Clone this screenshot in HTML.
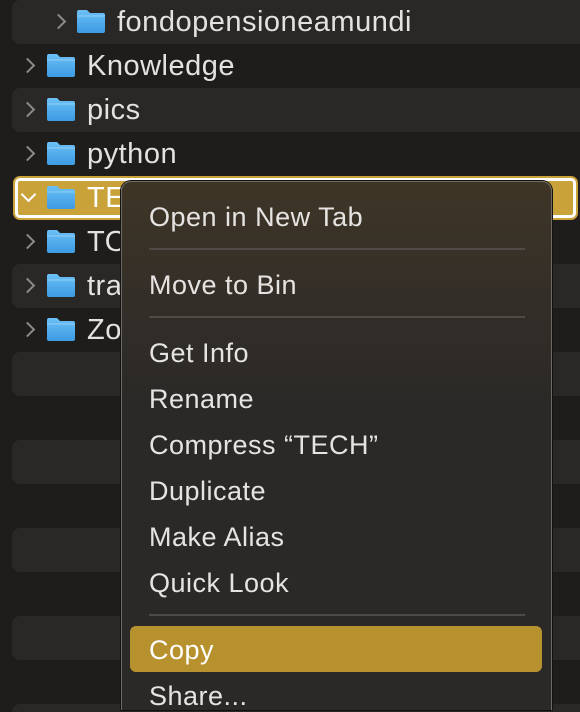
<!DOCTYPE html>
<html style="overflow:hidden;height:712px"><head><style>
body{margin:0;width:580px;height:712px;overflow:hidden;background:#1f1d1c;font-family:"Liberation Sans",sans-serif;position:relative}
.row{position:absolute;left:12px;right:0;height:44px;border-radius:8px 0 0 8px}
.s{background:#2a2827}
.t{position:absolute;color:#e4e2e0;font-size:29px;letter-spacing:0.5px;line-height:44px;white-space:nowrap}
.ch{position:absolute;width:9px;height:9px;border-right:2.5px solid #8d8a87;border-top:2.5px solid #8d8a87;transform:rotate(45deg)}
.f{position:absolute;width:30px;height:25px}
.menu{position:absolute;left:121px;top:181px;width:429px;height:528px;border:1.5px solid #6e6a64;border-bottom:none;border-radius:10px 10px 0 0;background:linear-gradient(#3e3526 0px,#332e28 120px,#2b2927 220px,#2b2927);box-shadow:0 0 0 1px #111}
.mi{position:absolute;left:27px;color:#e6e4e2;font-size:27px;letter-spacing:0.5px;line-height:44px;white-space:nowrap}
.sep{position:absolute;left:27px;width:376px;height:2px;background:#4e4b47}
</style></head><body>
<div class="row s" style="top:0"></div>
<div class="row s" style="top:88px"></div>
<div class="row s" style="top:264px"></div>
<div class="row s" style="top:352px"></div>
<div class="row s" style="top:440px"></div>
<div class="row s" style="top:528px"></div>
<div class="row s" style="top:616px"></div>
<div class="row s" style="top:704px;height:8px;border-radius:8px 0 0 0"></div>
<div style="position:absolute;left:13px;top:176px;width:565px;height:44px;border-radius:7px;background:#c9a23a;box-sizing:border-box;border:2px solid #c9a23a"><div style="position:absolute;inset:0;border:3px solid #fff;border-radius:5px"></div></div>

<svg width="0" height="0" style="position:absolute"><defs><linearGradient id="g" x1="0" y1="0" x2="0" y2="1"><stop offset="0" stop-color="#6cc0f5"/><stop offset="1" stop-color="#3d9be3"/></linearGradient></defs></svg>
<div class="ch" style="left:53px;top:16px"></div>
<svg class="f" style="left:76px;top:9px" viewBox="0 0 30 25"><path d="M1 3q0-2 2-2h8l3 3h13q2 0 2 2v16q0 2-2 2H3q-2 0-2-2z" fill="url(#g)"/><path d="M1 7h28" stroke="#8fd0fa" stroke-width="1"/></svg>
<div class="t" style="left:117px;top:0">fondopensioneamundi</div>

<div class="ch" style="left:22px;top:60px"></div>
<svg class="f" style="left:46px;top:53px" viewBox="0 0 30 25"><path d="M1 3q0-2 2-2h8l3 3h13q2 0 2 2v16q0 2-2 2H3q-2 0-2-2z" fill="url(#g)"/><path d="M1 7h28" stroke="#8fd0fa"/></svg>
<div class="t" style="left:87px;top:44px">Knowledge</div>

<div class="ch" style="left:22px;top:104px"></div>
<svg class="f" style="left:46px;top:97px" viewBox="0 0 30 25"><path d="M1 3q0-2 2-2h8l3 3h13q2 0 2 2v16q0 2-2 2H3q-2 0-2-2z" fill="url(#g)"/><path d="M1 7h28" stroke="#8fd0fa"/></svg>
<div class="t" style="left:87px;top:88px">pics</div>

<div class="ch" style="left:22px;top:148px"></div>
<svg class="f" style="left:46px;top:141px" viewBox="0 0 30 25"><path d="M1 3q0-2 2-2h8l3 3h13q2 0 2 2v16q0 2-2 2H3q-2 0-2-2z" fill="url(#g)"/><path d="M1 7h28" stroke="#8fd0fa"/></svg>
<div class="t" style="left:87px;top:132px">python</div>

<div class="ch" style="left:23px;top:189px;border-color:#fff;transform:rotate(135deg)"></div>
<svg class="f" style="left:46px;top:185px" viewBox="0 0 30 25"><path d="M1 3q0-2 2-2h8l3 3h13q2 0 2 2v16q0 2-2 2H3q-2 0-2-2z" fill="url(#g)"/><path d="M1 7h28" stroke="#8fd0fa"/></svg>
<div class="t" style="left:87px;top:176px;color:#fff">TECH</div>

<div class="ch" style="left:22px;top:236px"></div>
<svg class="f" style="left:46px;top:229px" viewBox="0 0 30 25"><path d="M1 3q0-2 2-2h8l3 3h13q2 0 2 2v16q0 2-2 2H3q-2 0-2-2z" fill="url(#g)"/><path d="M1 7h28" stroke="#8fd0fa"/></svg>
<div class="t" style="left:87px;top:220px">TO</div>

<div class="ch" style="left:22px;top:280px"></div>
<svg class="f" style="left:46px;top:273px" viewBox="0 0 30 25"><path d="M1 3q0-2 2-2h8l3 3h13q2 0 2 2v16q0 2-2 2H3q-2 0-2-2z" fill="url(#g)"/><path d="M1 7h28" stroke="#8fd0fa"/></svg>
<div class="t" style="left:87px;top:264px">tra</div>

<div class="ch" style="left:22px;top:324px"></div>
<svg class="f" style="left:46px;top:317px" viewBox="0 0 30 25"><path d="M1 3q0-2 2-2h8l3 3h13q2 0 2 2v16q0 2-2 2H3q-2 0-2-2z" fill="url(#g)"/><path d="M1 7h28" stroke="#8fd0fa"/></svg>
<div class="t" style="left:87px;top:308px">Zo</div>

<div class="menu">
<div class="mi" style="top:13px">Open in New Tab</div>
<div class="sep" style="top:66px"></div>
<div class="mi" style="top:81px">Move to Bin</div>
<div class="sep" style="top:134px"></div>
<div class="mi" style="top:149px">Get Info</div>
<div class="mi" style="top:195px">Rename</div>
<div class="mi" style="top:241px">Compress “TECH”</div>
<div class="mi" style="top:287px">Duplicate</div>
<div class="mi" style="top:333px">Make Alias</div>
<div class="mi" style="top:379px">Quick Look</div>
<div class="sep" style="top:432px"></div>
<div style="position:absolute;left:8px;top:444px;width:412px;height:46px;border-radius:6px;background:#b8912f"></div>
<div class="mi" style="top:446px;color:#fff">Copy</div>
<div class="mi" style="top:492px">Share...</div>
</div>
</body></html>
